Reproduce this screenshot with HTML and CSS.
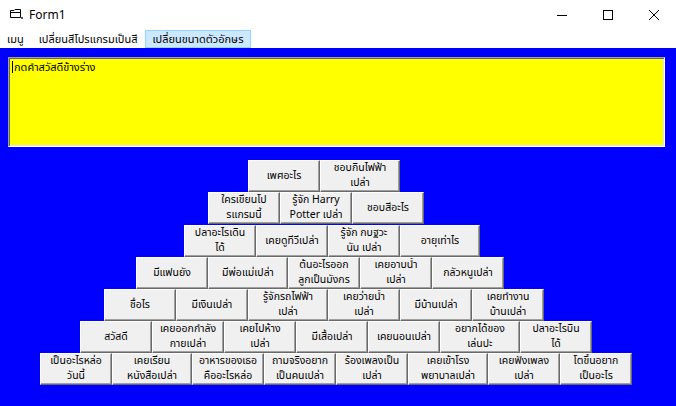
FILE: index.html
```html
<!DOCTYPE html>
<html lang="th">
<head>
    <meta charset="UTF-8">
    <title>Form1</title>
    <link rel="stylesheet" href="styles.css">
</head>
<body>
    <div class="window">
        <div class="titlebar">
            <svg class="app-icon" viewBox="0 0 14 12" width="14" height="12">
                <path d="M1.5 2.5 H5 L6 1.5 H11.5 V9.5 H1.5 Z" fill="none" stroke="#000" stroke-width="1"/>
                <path d="M1.5 4.5 H11.5" stroke="#000" stroke-width="1"/>
                <rect x="12" y="9" width="2" height="2" fill="#555"/>
            </svg>
            <span class="title">Form1</span>
            <div class="controls">
                <svg class="ctl" viewBox="0 0 10 10" width="10" height="10"><path d="M0 5.5 H10" stroke="#000" stroke-width="1"/></svg>
                <svg class="ctl" viewBox="0 0 10 10" width="10" height="10"><rect x="0.5" y="0.5" width="9" height="9" fill="none" stroke="#000" stroke-width="1"/></svg>
                <svg class="ctl" viewBox="0 0 10 10" width="10" height="10"><path d="M0 0 L10 10 M10 0 L0 10" stroke="#000" stroke-width="1"/></svg>
            </div>
        </div>
        <div class="menubar">
            <span class="menu-item">เมนู</span>
            <span class="menu-item">เปลี่ยนสีโปรแกรมเป็นสี</span>
            <span class="menu-item active">เปลี่ยนขนาดตัวอักษร</span>
        </div>
        <div class="client">
            <div class="textbox"><span class="caret"></span>กดคำสวัสดีข้างร่าง</div>
            <div class="pyramid">
                <div class="row r1">
                    <button class="btn">เพศอะไร</button>
                    <button class="btn wide">ชอบกินไฟฟ้า<br>เปล่า</button>
                </div>
                <div class="row r2">
                    <button class="btn">ใครเขียนโป<br>รแกรมนี้</button>
                    <button class="btn">รู้จัก Harry<br>Potter เปล่า</button>
                    <button class="btn">ชอบสีอะไร</button>
                </div>
                <div class="row r3">
                    <button class="btn">ปลาอะไรเดิน<br>ได้</button>
                    <button class="btn">เคยดูทีวีเปล่า</button>
                    <button class="btn">รู้จัก กบฐวะ<br>นัน เปล่า</button>
                    <button class="btn wide">อายุเท่าไร</button>
                </div>
                <div class="row r4">
                    <button class="btn">มีแฟนยัง</button>
                    <button class="btn wide">มีพ่อแม่เปล่า</button>
                    <button class="btn">ต้นอะไรออก<br>ลูกเป็นมังกร</button>
                    <button class="btn">เคยอาบน้ำ<br>เปล่า</button>
                    <button class="btn">กลัวหนูเปล่า</button>
                </div>
                <div class="row r5">
                    <button class="btn">ชื่อไร</button>
                    <button class="btn">มีเงินเปล่า</button>
                    <button class="btn wide">รู้จักรถไฟฟ้า<br>เปล่า</button>
                    <button class="btn">เคยว่ายน้ำ<br>เปล่า</button>
                    <button class="btn">มีบ้านเปล่า</button>
                    <button class="btn">เคยทำงาน<br>บ้านเปล่า</button>
                </div>
                <div class="row r6">
                    <button class="btn">สวัสดี</button>
                    <button class="btn">เคยออกกำลัง<br>กายเปล่า</button>
                    <button class="btn">เคยไปห้าง<br>เปล่า</button>
                    <button class="btn">มีเสื้อเปล่า</button>
                    <button class="btn">เคยนอนเปล่า</button>
                    <button class="btn wide">อยากได้ของ<br>เล่นปะ</button>
                    <button class="btn">ปลาอะไรบิน<br>ได้</button>
                </div>
                <div class="row r7">
                    <button class="btn">เป็นอะไรหล่อ<br>วันนี้</button>
                    <button class="btn wide">เคยเรียน<br>หนังสือเปล่า</button>
                    <button class="btn">อาหารของเธอ<br>คืออะไรหล่อ</button>
                    <button class="btn">ถามจริงอยาก<br>เป็นคนเปล่า</button>
                    <button class="btn">ร้องเพลงเป็น<br>เปล่า</button>
                    <button class="btn wide">เคยเข้าโรง<br>พยาบาลเปล่า</button>
                    <button class="btn">เคยฟังเพลง<br>เปล่า</button>
                    <button class="btn">โตขึ้นอยาก<br>เป็นอะไร</button>
                </div>
            </div>
        </div>
    </div>
</body>
</html>
```

FILE: styles.css
```css
html, body { margin: 0; padding: 0; background: #0000ff; }
body { font-family: "Noto Sans Thai", "Leelawadee UI", Tahoma, "Noto Sans", sans-serif; }
.window { width: 676px; height: 406px; display: flex; flex-direction: column; overflow: hidden; }

.titlebar { height: 29px; background: #fff; display: flex; align-items: center; flex-shrink: 0; }
.app-icon { margin-left: 9px; margin-top: -1px; }
.title { margin-left: 6px; font-size: 12px; color: #000; font-family: "Noto Sans", "Open Sans", sans-serif; }
.controls { margin-left: auto; display: flex; align-items: center; margin-right: 17px; gap: 36px; }
.ctl { display: block; }

.menubar { height: 19px; background: #fff; display: flex; align-items: center; padding-left: 0; flex-shrink: 0; }
.menu-item { font-size: 11px; color: #000; padding: 0 6px; height: 18px; line-height: 18px; border: 1px solid transparent; box-sizing: border-box; margin-right: 1px; }
.menu-item.active { background: #cce8ff; border-color: #99d1ff; }

.client { flex: 1; background: #0000ff; padding: 9px 11px 0 8px; }
.textbox {
    height: 90px; background: #ffff00; box-sizing: border-box;
    border: 1px solid; border-color: #a0a0a0 #fff #fff #a0a0a0;
    box-shadow: inset 1px 1px 0 #696969, inset -1px -1px 0 #e3e3e3;
    padding: 2px 3px; font-size: 11px; line-height: 15px; color: #000;
}
.caret { display: inline-block; width: 1px; height: 12px; background: #000; vertical-align: -2px; margin-right: 1px; }

.pyramid { margin-top: 13px; margin-left: -8px; display: flex; flex-direction: column; }
.row { display: flex; height: 32px; }
.r1 { margin-left: 248px; }
.r2 { margin-left: 208px; }
.r3 { margin-left: 184px; margin-top: 1px; }
.r4 { margin-left: 136px; }
.r5 { margin-left: 104px; }
.r6 { margin-left: 80px; }
.r7 { margin-left: 40px; }

.btn {
    width: 72px; height: 32px; margin: 0; padding: 0 1px; box-sizing: border-box;
    background: #f0f0f0; color: #000;
    border: 1px solid; border-color: #fff #696969 #696969 #fff;
    box-shadow: inset -1px -1px 0 #a0a0a0;
    font-family: "Noto Sans Thai", "Leelawadee UI", Tahoma, "Noto Sans", sans-serif;
    font-size: 10.5px; line-height: 15px; text-align: center; white-space: nowrap; overflow: hidden;
}
.btn.wide { width: 80px; }
```
